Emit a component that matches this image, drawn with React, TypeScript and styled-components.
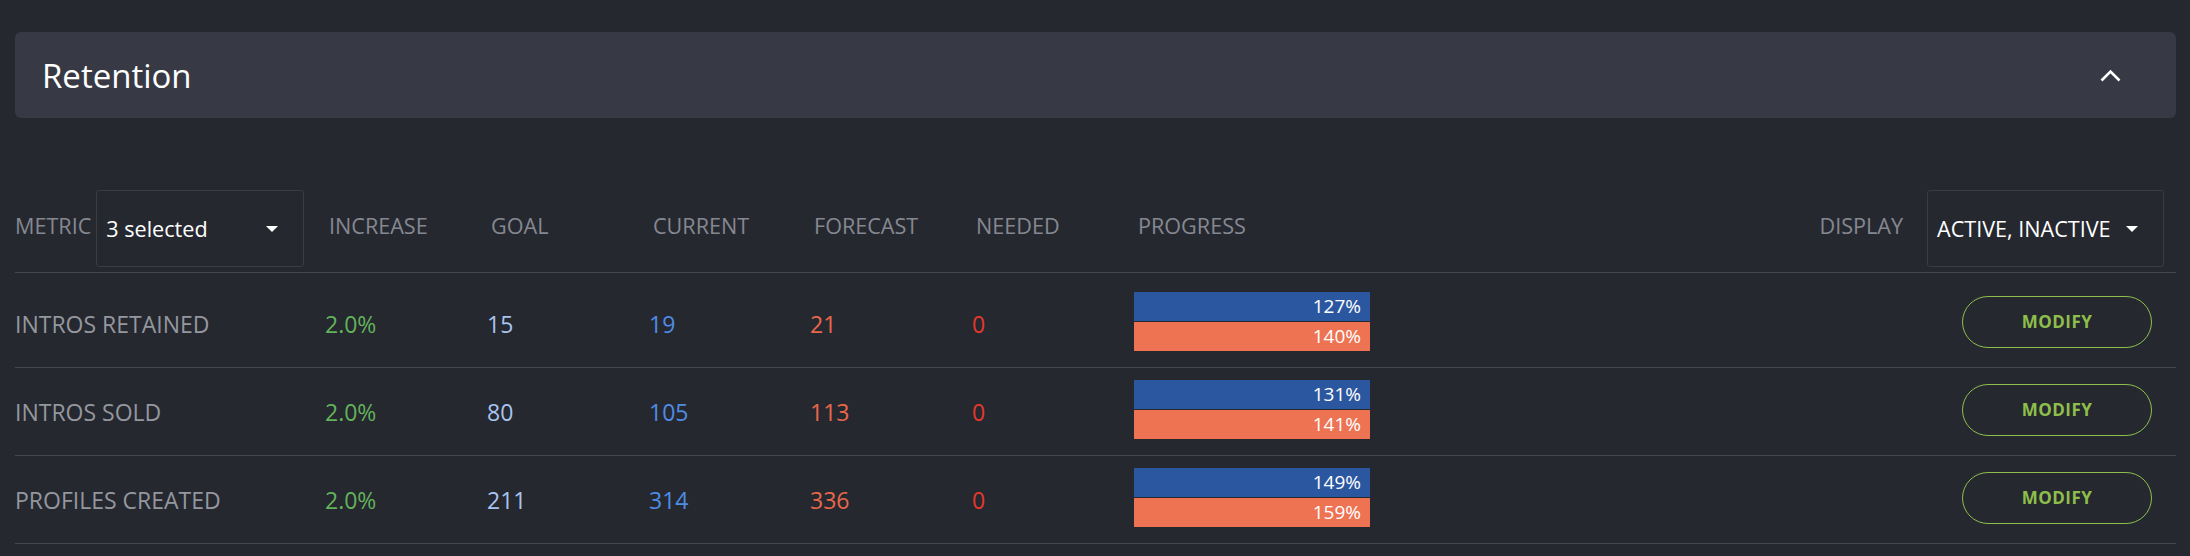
import React from 'react';
import styled, { createGlobalStyle } from 'styled-components';

const GlobalStyle = createGlobalStyle`
  body {
    margin: 0;
    background: #262830;
    font-family: 'Open Sans', 'Noto Sans', sans-serif;
  }
`;

const gridColumns = '310px 162px 162px 161px 162px 162px 236px 1fr';

const Page = styled.div`
  padding: 32px 14px 0 15px;
`;

const Card = styled.div`
  height: 86px;
  box-sizing: border-box;
  background: #373a44;
  border-radius: 6px;
  display: flex;
  align-items: center;
  justify-content: space-between;
  padding: 0 46px 0 27px;
  margin-bottom: 72px;
`;

const Title = styled.h2`
  margin: 0;
  font-size: 33px;
  font-weight: 400;
  color: #ffffff;
`;

const CollapseButton = styled.button`
  width: 40px;
  height: 40px;
  border: none;
  background: transparent;
  padding: 0;
  display: flex;
  align-items: center;
  justify-content: center;
  cursor: pointer;
`;

const HeaderRow = styled.div`
  display: grid;
  grid-template-columns: ${gridColumns};
  align-items: center;
  padding-bottom: 5px;
  border-bottom: 1px solid #45474e;
`;

const HeaderLabel = styled.div<{ $indent?: number }>`
  font-size: 21.6px;
  color: #858890;
  padding-bottom: 7px;
  padding-left: ${(p) => p.$indent ?? 4}px;
  white-space: nowrap;
`;

const FilterCell = styled.div`
  display: flex;
  align-items: center;
  gap: 5px;
`;

const DisplayCell = styled.div`
  display: flex;
  align-items: center;
  justify-content: flex-end;
  gap: 24px;
  padding-right: 12px;
`;

const Select = styled.div<{ $width: number }>`
  width: ${(p) => p.$width}px;
  height: 77px;
  box-sizing: border-box;
  border: 1px solid #393c45;
  border-radius: 3px;
  display: flex;
  align-items: center;
  justify-content: space-between;
  padding: 0 25px 0 9px;
  font-size: 21.6px;
  color: #ffffff;
  white-space: nowrap;
`;

const Body = styled.div`
  padding-top: 7px;
`;

const Row = styled.div`
  display: grid;
  grid-template-columns: ${gridColumns};
  align-items: center;
  padding: 12px 0 16px;
  border-bottom: 1px solid #45474e;
`;

const Cell = styled.div<{ $color: string }>`
  font-size: 23px;
  color: ${(p) => p.$color};
  padding-top: 4px;
  white-space: nowrap;
`;

const Progress = styled.div`
  display: flex;
  flex-direction: column;
  gap: 1px;
`;

const Bar = styled.div<{ $color: string }>`
  height: 29px;
  line-height: 29px;
  background: ${(p) => p.$color};
  color: #ffffff;
  font-size: 19px;
  text-align: right;
  padding-right: 9px;
`;

const ActionCell = styled.div`
  display: flex;
  justify-content: flex-end;
  padding-right: 24px;
`;

const ModifyButton = styled.button`
  width: 190px;
  height: 52px;
  border: 1.5px solid #8dbf4a;
  border-radius: 26px;
  background: transparent;
  color: #8dbf4a;
  font-family: 'Open Sans', 'Noto Sans', sans-serif;
  font-size: 17px;
  font-weight: 700;
  letter-spacing: 0.5px;
  cursor: pointer;
`;

const Caret = () => (
  <svg width="12" height="6" viewBox="0 0 12 6">
    <path d="M0 0 H12 L6 6 Z" fill="#ffffff" />
  </svg>
);

const ChevronUp = () => (
  <svg width="21" height="13" viewBox="0 0 21 13">
    <polyline
      points="1.5,11.5 10.5,2.5 19.5,11.5"
      fill="none"
      stroke="#ffffff"
      strokeWidth="2.6"
    />
  </svg>
);

const metrics = [
  { name: 'INTROS RETAINED', increase: '2.0%', goal: 15, current: 19, forecast: 21, needed: 0, progress: 127, forecastProgress: 140 },
  { name: 'INTROS SOLD', increase: '2.0%', goal: 80, current: 105, forecast: 113, needed: 0, progress: 131, forecastProgress: 141 },
  { name: 'PROFILES CREATED', increase: '2.0%', goal: 211, current: 314, forecast: 336, needed: 0, progress: 149, forecastProgress: 159 },
];

const App = () => {
  return (
    <Page>
      <GlobalStyle />
      <Card>
        <Title>Retention</Title>
        <CollapseButton aria-label="Collapse">
          <ChevronUp />
        </CollapseButton>
      </Card>

      <HeaderRow>
        <FilterCell>
          <HeaderLabel $indent={0}>METRIC</HeaderLabel>
          <Select $width={208}>
            3 selected
            <Caret />
          </Select>
        </FilterCell>
        <HeaderLabel>INCREASE</HeaderLabel>
        <HeaderLabel>GOAL</HeaderLabel>
        <HeaderLabel>CURRENT</HeaderLabel>
        <HeaderLabel>FORECAST</HeaderLabel>
        <HeaderLabel>NEEDED</HeaderLabel>
        <HeaderLabel>PROGRESS</HeaderLabel>
        <DisplayCell>
          <HeaderLabel $indent={0}>DISPLAY</HeaderLabel>
          <Select $width={237}>
            ACTIVE, INACTIVE
            <Caret />
          </Select>
        </DisplayCell>
      </HeaderRow>

      <Body>
        {metrics.map((m) => (
          <Row key={m.name}>
            <Cell $color="#94979e">{m.name}</Cell>
            <Cell $color="#62b25a">{m.increase}</Cell>
            <Cell $color="#a9c4ee">{m.goal}</Cell>
            <Cell $color="#4f8ce4">{m.current}</Cell>
            <Cell $color="#e8674b">{m.forecast}</Cell>
            <Cell $color="#e2392c">{m.needed}</Cell>
            <Progress>
              <Bar $color="#2b57a1">{m.progress}%</Bar>
              <Bar $color="#ed7353">{m.forecastProgress}%</Bar>
            </Progress>
            <ActionCell>
              <ModifyButton>MODIFY</ModifyButton>
            </ActionCell>
          </Row>
        ))}
      </Body>
    </Page>
  );
};

export default App;
